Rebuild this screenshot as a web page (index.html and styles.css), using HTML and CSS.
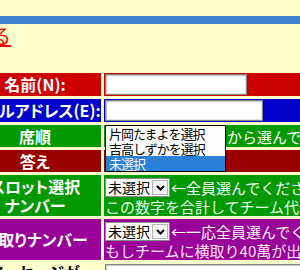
FILE: index.html
```html
<!DOCTYPE html>
<html lang="ja">
  <head>
    <meta charset="UTF-8" />
    <meta name="viewport" content="width=device-width, initial-scale=1" />
    <title>エントリーフォーム</title>
    <link rel="stylesheet" href="styles.css">
  </head>

  <body>
    <div class="wrap">
      <div class="back"><a href="#">戻る</a></div>

      <form>
        <table class="entry">
          <tr class="row-name">
            <th>名前(N):</th>
            <td><input type="text" class="text-name" /></td>
          </tr>
          <tr class="row-mail">
            <th>メールアドレス(E):</th>
            <td><input type="text" class="text-mail" /></td>
          </tr>
          <tr class="row-seat">
            <th>席順</th>
            <td>
              <span class="select select-wide">未選択<span class="arrow"></span></span>から選んでください
              <!-- opened dropdown list -->
              <div class="popup">
                <div class="option">片岡たまよを選択</div>
                <div class="option">吉高しずかを選択</div>
                <div class="option selected">未選択</div>
              </div>
            </td>
          </tr>
          <tr class="row-answer">
            <th>答え</th>
            <td></td>
          </tr>
          <tr class="row-slot">
            <th>スロット選択<br />ナンバー</th>
            <td>
              <div class="line">
                <span class="select">未選択<span class="arrow"><svg width="13" height="13" viewBox="0 0 13 13"><polyline points="3,5 6.5,8.5 10,5" fill="none" stroke="#000" stroke-width="2" /></svg></span></span>←全員選んでください
              </div>
              <div class="note note-green">この数字を合計してチーム代表とします</div>
            </td>
          </tr>
          <tr class="row-steal">
            <th>横取りナンバー</th>
            <td>
              <div class="line">
                <span class="select">未選択<span class="arrow"><svg width="13" height="13" viewBox="0 0 13 13"><polyline points="3,5 6.5,8.5 10,5" fill="none" stroke="#000" stroke-width="2" /></svg></span></span>←一応全員選んでください
              </div>
              <div class="note note-pink">もしチームに横取り40萬が出たら</div>
            </td>
          </tr>
          <tr class="row-message">
            <th>メッセージが<br />あれば</th>
            <td><textarea class="message"></textarea></td>
          </tr>
        </table>
      </form>
    </div>
  </body>
</html>
```

FILE: styles.css
```css
html {
  background: #ffffcc;
}

body {
  margin: 0;
  padding: 16px 0 0;
  font-family: "Noto Sans CJK JP", sans-serif;
}

.wrap {
  width: 300px;
  height: 254px;
  overflow: hidden;
  border-top: 8px solid #3f82d4;
  box-sizing: border-box;
  background-image: linear-gradient(#ffffcc, #ffffcc);
}

.back {
  margin-left: -29px;
  font-size: 20px;
  line-height: 24px;
}

.back a {
  color: #ff0000;
}

.entry {
  margin: 22px 0 0 -34px;
  border-spacing: 3px;
  width: 640px;
}

.entry th {
  width: 132px;
  padding: 0;
  color: #ffffff;
  font-size: 16px;
  line-height: 19px;
  font-weight: bold;
  text-align: center;
  white-space: nowrap;
  font-feature-settings: "palt";
}

.entry td {
  padding: 1px;
  color: #ffffff;
  font-size: 15px;
  line-height: 19px;
  text-align: left;
  white-space: nowrap;
  vertical-align: middle;
}

.row-name th,
.row-name td {
  background: #cc0000;
  height: 21px;
}

.row-mail th,
.row-mail td {
  background: #0000cc;
  height: 21px;
}

.row-seat th,
.row-seat td {
  background: #009900;
  height: 20px;
}

.row-seat td {
  position: relative;
}

.row-answer th,
.row-answer td {
  background: #990000;
  height: 20px;
}

.row-slot th,
.row-slot td {
  background: #009900;
  height: 37px;
}

.row-steal th,
.row-steal td {
  background: #990099;
  height: 39px;
}

.row-message th {
  color: #000000;
  vertical-align: top;
  line-height: 18px;
}

.row-message td {
  vertical-align: top;
}

input[type="text"],
.message {
  box-sizing: border-box;
  display: block;
  height: 21px;
  margin: 0;
  padding: 0;
  border: 1px solid #858585;
  box-shadow: inset 1px 1px 0 #c4c4c4, inset -1px -1px 0 #e6e6e6;
  background: #ffffff;
}

.text-name {
  width: 142px;
}

.text-mail {
  width: 158px;
}

.message {
  width: 200px;
  height: 60px;
  resize: none;
}

.select {
  display: inline-flex;
  align-items: center;
  justify-content: space-between;
  box-sizing: border-box;
  width: 65px;
  height: 19px;
  padding-left: 2px;
  margin-right: 1px;
  vertical-align: top;
  background: #ffffff;
  border: 1px solid #8a8a8a;
  color: #000000;
  font-size: 14px;
  line-height: 17px;
}

.select-wide {
  width: 121px;
}

.arrow {
  display: flex;
  align-items: center;
  justify-content: center;
  box-sizing: border-box;
  width: 16px;
  height: 15px;
  margin-right: 1px;
  border: 1px solid #b5b5b5;
  background: #f4f4f4;
}

.line {
  padding-top: 2px;
  height: 19px;
}

.note {
  height: 18px;
}

.note-green {
  color: #e6ffe6;
}

.note-pink {
  color: #ffe6ff;
}

.popup {
  position: absolute;
  top: 0;
  left: 1px;
  width: 119px;
  border: 1px solid #000000;
  background: #ffffff;
  z-index: 2;
}

.option {
  height: 15px;
  padding-left: 3px;
  color: #000000;
  font-size: 13px;
  line-height: 15px;
  letter-spacing: -1px;
}

.option.selected {
  background: #2a7fd6;
  color: #ffffff;
}
```
